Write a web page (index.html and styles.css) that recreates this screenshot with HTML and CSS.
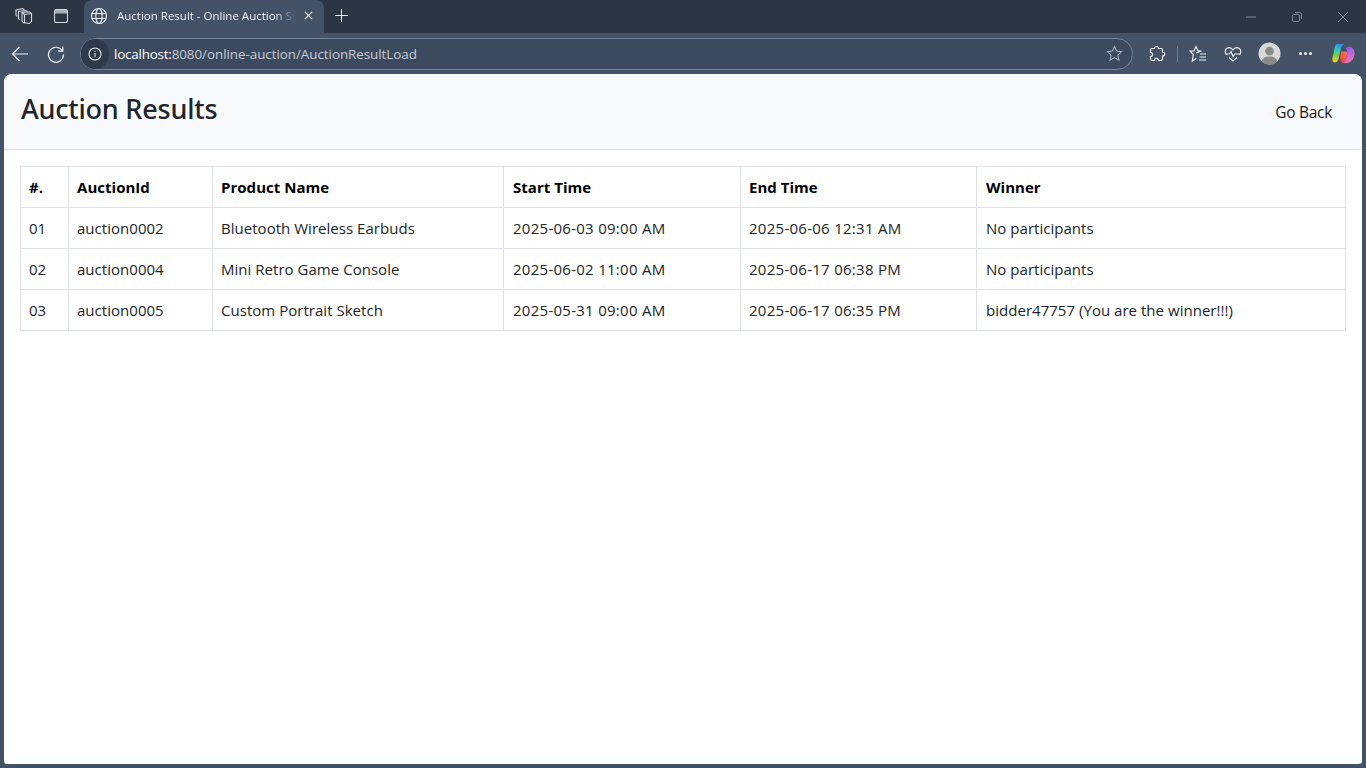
FILE: index.html
```html
<!DOCTYPE html>
<html lang="en">
<head>
<meta charset="utf-8">
<title>Auction Result - Online Auction System</title>
<link rel="stylesheet" href="styles.css">
</head>
<body>
<div class="window">
  <div class="tabstrip">
    <div class="strip-icons">
      <svg class="ic18" viewBox="0 0 18 18"><path d="M7 5.500 14.500 4.800 16.500 6.500V14.500L14.500 16.500 8.500 15.800 7 14z"/><path d="M7 5.500 9.500 7.500 16.500 6.500M9.500 7.500V16"/><path d="M4.500 12.800 3.500 11.500V4.500L10.500 3.500 12.500 4.800"/><path d="M2 9.500 1 8V3L7.500 1.500 9.500 3"/></svg>
      <svg class="ic18 gap" viewBox="0 0 18 18"><rect x="2.500" y="2.500" width="13" height="13" rx="2"/><path class="fill" d="M3 3h12v3.500H3z"/></svg>
    </div>
    <div class="tab">
      <svg class="ic18 globe" viewBox="0 0 18 18"><circle cx="9" cy="9" r="7.500"/><ellipse cx="9" cy="9" rx="3.200" ry="7.500"/><path d="M2 6.500h14M2 11.500h14"/></svg>
      <span class="tab-title">Auction Result - Online Auction System</span>
      <svg class="tab-x" viewBox="0 0 10 10"><path d="M1 1l8 8M9 1l-8 8"/></svg>
    </div>
    <svg class="plus" viewBox="0 0 16 16"><path d="M8 1v14M1 8h14"/></svg>
    <div class="winctl">
      <svg class="wc" viewBox="0 0 12 12"><path d="M1 6h10"/></svg>
      <svg class="wc" viewBox="0 0 12 12"><rect x="1.500" y="3.500" width="7" height="7" rx="1.200"/><path d="M4 1.500h4.500c1.200 0 2 .8 2 2V8"/></svg>
      <svg class="wc" viewBox="0 0 12 12"><path d="M1 1l10 10M11 1L1 11"/></svg>
    </div>
  </div>
  <div class="toolbar">
    <svg class="nav back" viewBox="0 0 18 18"><path d="M17 9H1.500M8.500 2 1.500 9l7 7"/></svg>
    <svg class="nav reload" viewBox="0 0 18 18"><path d="M15.500 6A7.500 7.500 0 1 0 16.500 9.500M15.800 1.500V6.200H11"/></svg>
    <div class="omnibox">
      <span class="info"><svg viewBox="0 0 14 14"><circle cx="7" cy="7" r="6"/><path d="M7 6v4M7 3.700v1.100"/></svg></span>
      <span class="url"><b>localhost:</b>8080/online-auction/AuctionResultLoad</span>
      <svg class="star" viewBox="0 0 18 18"><path d="M9 1.500l2.300 5 5.200.6-3.900 3.600 1.100 5.300L9 13.300 4.300 16l1.100-5.300L1.500 7.100l5.200-.6z"/></svg>
    </div>
    <svg class="tool ext" viewBox="0 0 18 18"><path d="M6.500 3.500C6.500 2 7.500 1.500 8.500 1.500S10.500 2.200 10.500 3.500H13C14 3.500 14.500 4 14.500 5V7.200C16 7.200 16.700 8 16.700 9S16 11 14.500 11V13.500C14.500 14.500 14 15.500 13 15.500H10.500C10.500 14 9.700 13.300 8.500 13.300S6.500 14 6.500 15.500H4C3 15.500 2.500 14.500 2.500 13.500V11.500C3.800 11.500 4.500 10.500 4.500 9.500S3.800 7.500 2.500 7.500V5C2.500 4 3 3.500 4 3.500z"/></svg>
    <span class="divider"></span>
    <svg class="tool" viewBox="0 0 18 18"><path d="M8.500 8H7L12.500 6H9L7 1.500 5 6H1L4.300 9.500 3.300 16 7.500 13.200"/><path d="M11 9h6M10.500 12h6.500M10 15h7"/></svg>
    <svg class="tool" viewBox="0 0 18 18"><path d="M2.500 10C.5 7.500 1 4.500 3 3.300S7.500 2.800 9 5c1.500-2.200 4-2.800 6-1.700s2.500 4.200.5 6.700M5 12.500l4 3.500 4-3.500"/><path d="M1.500 9h4l1.500-2.500 2 5 1.700-2.500h6"/></svg>
    <span class="avatar"><svg viewBox="0 0 24 24"><circle cx="12" cy="12" r="11.500" class="a-bg"/><circle cx="12" cy="9.500" r="4.500" class="a-fg"/><path class="a-fg" d="M4 20c1-4 4-5 8-5s7 1 8 5c-2 2.500-5 3.500-8 3.500S6 22.500 4 20z"/></svg></span>
    <span class="dots"><i></i><i></i><i></i></span>
    <svg class="copilot" viewBox="0 0 24 24">
      <defs>
        <linearGradient id="cg1" x1=".6" y1="0" x2=".3" y2="1"><stop offset="0" stop-color="#2f8ff0"/><stop offset=".35" stop-color="#2fc7c0"/><stop offset=".65" stop-color="#7fd040"/><stop offset="1" stop-color="#f7d020"/></linearGradient>
        <linearGradient id="cg2" x1=".3" y1="0" x2=".7" y2="1"><stop offset="0" stop-color="#7c5ce8"/><stop offset=".5" stop-color="#c860d8"/><stop offset="1" stop-color="#f47aa8"/></linearGradient>
        <linearGradient id="cg3" x1=".8" y1="0" x2=".2" y2="1"><stop offset="0" stop-color="#f8705a"/><stop offset="1" stop-color="#f0462e"/></linearGradient>
      </defs>
      <path fill="url(#cg1)" d="M6 2H13C10.500 3 9.500 5 9 8L7 17C6.500 20 4.500 21.500 3 21.500 1 21.500 0 19.500.5 17L3 5C3.500 3 4.500 2 6 2z"/>
      <path fill="url(#cg2)" d="M14 6.500C15 5.500 16.500 5 18 5 21 5 23.500 8 23.500 11.500 23.500 17 20 22 15 22H11C14 20.500 15 18 15.500 15L16 11C16 9 15.500 7.500 14 6.500z"/>
      <path fill="url(#cg3)" d="M9.500 10 15.800 10 15.500 15C15 18 13.500 20.500 11 22 8.500 20 8 16 9.500 10z"/>
    </svg>
  </div>
  <main class="page">
    <header class="topbar">
      <h1>Auction Results</h1>
      <a class="back-link" href="#">Go Back</a>
    </header>
    <section class="content">
      <table>
        <colgroup><col class="c1"><col class="c2"><col class="c3"><col class="c4"><col class="c5"><col class="c6"></colgroup>
        <thead><tr><th>#.</th><th>AuctionId</th><th>Product Name</th><th class="inset">Start Time</th><th>End Time</th><th class="inset">Winner</th></tr></thead>
        <tbody>
          <tr><td>01</td><td>auction0002</td><td>Bluetooth Wireless Earbuds</td><td class="time inset">2025-06-03 09:00 AM</td><td class="time">2025-06-06 12:31 AM</td><td class="inset">No participants</td></tr>
          <tr><td>02</td><td>auction0004</td><td>Mini Retro Game Console</td><td class="time inset">2025-06-02 11:00 AM</td><td class="time">2025-06-17 06:38 PM</td><td class="inset">No participants</td></tr>
          <tr><td>03</td><td>auction0005</td><td>Custom Portrait Sketch</td><td class="time inset">2025-05-31 09:00 AM</td><td class="time">2025-06-17 06:35 PM</td><td class="inset">bidder47757 (You are the winner!!!)</td></tr>
        </tbody>
      </table>
    </section>
  </main>
</div>
</body>
</html>
```
FILE: styles.css
```css
* { box-sizing: border-box; }
html, body { margin: 0; height: 100%; overflow: hidden; }
body { font-family: "Open Sans", "Noto Sans", sans-serif; }
svg { display: block; fill: none; stroke: #e6e9ee; stroke-width: 1.1; flex: none; }

.window { width: 1366px; height: 768px; display: flex; flex-direction: column; background: #445268; }

.tabstrip { height: 33px; flex: none; display: flex; align-items: center; background: #2b3544; color: #fff; }
.strip-icons { width: 84px; flex: none; display: flex; align-items: center; padding-left: 15px; margin-bottom: 1px; }
.ic18 { width: 18px; height: 18px; stroke: #d5d9df; }
.ic18.gap { margin-left: 19px; }
.ic18 .fill { fill: #d5d9df; fill-opacity: .75; stroke: none; }
.tab { width: 240px; height: 33px; flex: none; display: flex; align-items: center; padding: 0 9px 2px 6px; background: #445268; border-radius: 8px 8px 0 0; }
.globe { width: 18px; height: 18px; stroke: #eef0f3; }
.tab-title { width: 179px; margin-left: 9px; font-size: 11.500px; white-space: nowrap; overflow: hidden; color: #f2f4f6; -webkit-mask-image: linear-gradient(90deg, #000 88%, transparent); mask-image: linear-gradient(90deg, #000 88%, transparent); }
.tab-x { width: 9px; height: 9px; margin-left: 8px; stroke: #fff; stroke-width: 1.300; }
.plus { width: 15px; height: 15px; margin: 0 0 2px 10px; stroke: #e8eaee; }
.winctl { margin-left: auto; display: flex; align-items: center; gap: 34px; padding-right: 17px; }
.wc { width: 12px; height: 12px; stroke: #8b94a2; stroke-width: .9; }

.toolbar { height: 41px; flex: none; display: flex; align-items: center; background: #445268; }
.nav { width: 18px; height: 18px; stroke: #f0f2f5; stroke-width: 1.200; }
.back { margin-left: 11px; }
.reload { margin-left: 18px; }
.omnibox { width: 1053px; height: 32px; margin-left: 15px; flex: none; display: flex; align-items: center; border: 1px solid #75829a; border-radius: 16px; background: #3c4a60; }
.info { width: 28px; height: 30px; flex: none; display: flex; align-items: center; justify-content: center; border-radius: 15px; background: #2e3a4c; }
.info svg { width: 14px; height: 14px; stroke: #e6e9ee; }
.url { margin-left: 5px; font-size: 13.400px; letter-spacing: -.04px; color: #c4cad4; white-space: nowrap; }
.url b { font-weight: 500; color: #fff; letter-spacing: -.2px; }
.star { width: 17px; height: 17px; margin-left: auto; margin-right: 9px; stroke: #aab2be; }
.tool { width: 18px; height: 18px; stroke: #f0f2f5; }
.ext { margin-left: 15px; }
.divider { width: 1px; height: 16px; margin: 0 11px; background: #6e7a8e; }
.tool + .tool { margin-left: 17px; }
.avatar { width: 23px; height: 23px; margin-left: 16px; flex: none; }
.avatar svg { width: 23px; height: 23px; stroke: none; }
.a-bg { fill: #d8d8d8; }
.a-fg { fill: #8a8a8a; }
.dots { width: 13px; margin-left: 18px; flex: none; display: flex; justify-content: space-between; }
.dots i { width: 3px; height: 3px; border-radius: 50%; background: #f0f2f5; }
.copilot { width: 23px; height: 23px; margin-left: 20px; stroke: none; }

.page { flex: 1; margin: 0 4px 4px; background: #fff; border-radius: 8px 8px 3px 3px; overflow: hidden; }
.topbar { height: 76px; display: flex; align-items: center; justify-content: space-between; padding: 0 30px 0 17px; background: #f8f9fa; border-bottom: 1px solid #dee2e6; }
h1 { margin: 0 0 4px; font-family: "Noto Sans", sans-serif; font-size: 27px; font-weight: 500; letter-spacing: -.2px; color: #212529; line-height: 1.2; }
.back-link { margin-top: 1px; font-size: 15.500px; letter-spacing: -.3px; color: #1a1a1a; text-decoration: none; }

.content { padding: 16px 16px 0; }
table { width: 1325px; border-collapse: collapse; table-layout: fixed; font-size: 15px; letter-spacing: .03px; color: #212529; }
.c1 { width: 48px; } .c2 { width: 144px; } .c3 { width: 291px; } .c4 { width: 237px; } .c5 { width: 236px; } .c6 { width: 369px; }
th, td { height: 41px; padding: 0 8px; border: 1px solid #dee2e6; text-align: left; white-space: nowrap; }
th { font-weight: 700; color: #000; }
.inset { padding-left: 9px; }
.time { letter-spacing: .27px; }
```
